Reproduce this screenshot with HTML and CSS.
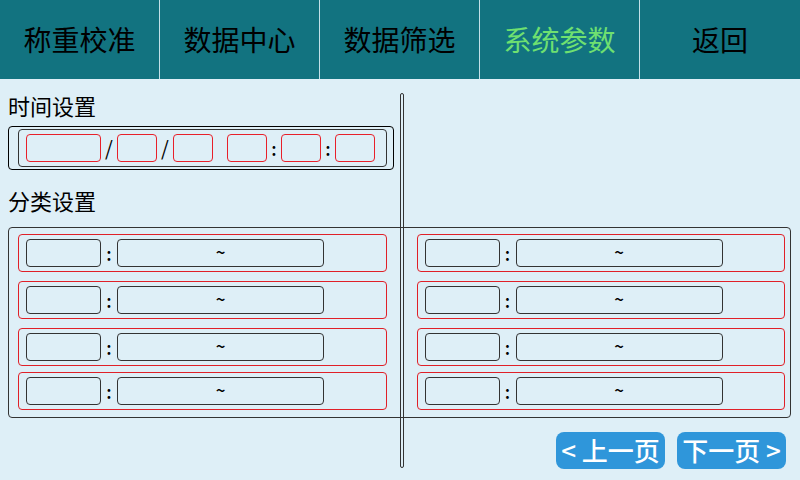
FILE: index.html
```html
<!DOCTYPE html>
<html lang="zh-CN">
<head>
  <meta charset="utf-8">
  <meta name="viewport" content="width=device-width, initial-scale=1">
  <title>系统参数</title>
  <link rel="stylesheet" href="styles.css">
</head>
<body>
  <nav class="tabs">
    <a class="tab" href="#calibration">称重校准</a>
    <a class="tab" href="#data">数据中心</a>
    <a class="tab" href="#filter">数据筛选</a>
    <a class="tab tab-active" href="#system" aria-current="page">系统参数</a>
    <a class="tab" href="#back">返回</a>
  </nav>

  <main class="content">
    <div class="divider"></div>

    <h2 class="heading">时间设置</h2>
    <section class="time-panel">
      <div class="time-fields">
        <input class="field field-long field-red" type="text" aria-label="年">
        <span class="slash">/</span>
        <input class="field field-short field-red" type="text" aria-label="月">
        <span class="slash">/</span>
        <input class="field field-short field-red" type="text" aria-label="日">
        <span class="colon"></span>
        <input class="field field-short field-red" type="text" aria-label="时">
        <span class="colon">:</span>
        <input class="field field-short field-red" type="text" aria-label="分">
        <span class="colon">:</span>
        <input class="field field-short field-red" type="text" aria-label="秒">
      </div>
    </section>

    <h2 class="heading">分类设置</h2>
    <section class="class-panel">
      <div class="class-row">
        <input class="field field-long" type="text" aria-label="分类1名称">
        <span class="colon colon-wide">:</span>
        <input class="field field-range" type="text" value="~" aria-label="分类1范围">
      </div>
      <div class="class-row">
        <input class="field field-long" type="text" aria-label="分类2名称">
        <span class="colon colon-wide">:</span>
        <input class="field field-range" type="text" value="~" aria-label="分类2范围">
      </div>
      <div class="class-row">
        <input class="field field-long" type="text" aria-label="分类3名称">
        <span class="colon colon-wide">:</span>
        <input class="field field-range" type="text" value="~" aria-label="分类3范围">
      </div>
      <div class="class-row">
        <input class="field field-long" type="text" aria-label="分类4名称">
        <span class="colon colon-wide">:</span>
        <input class="field field-range" type="text" value="~" aria-label="分类4范围">
      </div>
      <div class="class-row">
        <input class="field field-long" type="text" aria-label="分类5名称">
        <span class="colon colon-wide">:</span>
        <input class="field field-range" type="text" value="~" aria-label="分类5范围">
      </div>
      <div class="class-row">
        <input class="field field-long" type="text" aria-label="分类6名称">
        <span class="colon colon-wide">:</span>
        <input class="field field-range" type="text" value="~" aria-label="分类6范围">
      </div>
      <div class="class-row">
        <input class="field field-long" type="text" aria-label="分类7名称">
        <span class="colon colon-wide">:</span>
        <input class="field field-range" type="text" value="~" aria-label="分类7范围">
      </div>
      <div class="class-row">
        <input class="field field-long" type="text" aria-label="分类8名称">
        <span class="colon colon-wide">:</span>
        <input class="field field-range" type="text" value="~" aria-label="分类8范围">
      </div>
    </section>

    <div class="pager">
      <button class="page-button" type="button">&lt; 上一页</button>
      <button class="page-button" type="button">下一页 &gt;</button>
    </div>
  </main>
</body>
</html>
```

FILE: styles.css
```css
* {
  box-sizing: border-box;
}

body {
  margin: 0;
  min-height: 100vh;
  display: flex;
  flex-direction: column;
  background: #deeff7;
  color: #000;
  font-family: "Noto Sans CJK SC", sans-serif;
}

.tabs {
  display: grid;
  grid-template-columns: repeat(5, 1fr);
  background: #127380;
}

.tab {
  padding: 19px 0 20px;
  border-right: 1px solid #c4e0e8;
  color: #000;
  font-size: 28px;
  line-height: 40px;
  text-align: center;
  text-decoration: none;
}

.tab:last-child {
  border-right: 0;
}

.tab-active {
  color: #6fe070;
}

.content {
  position: relative;
  flex: 1;
  padding: 10px 9px 11px 8px;
}

/* Centre rule, drawn over the panels */
.divider {
  position: absolute;
  top: 14px;
  bottom: 12px;
  left: 50%;
  width: 4px;
  border: 1px solid #333;
  border-radius: 2px;
}

.heading {
  margin: 0;
  font-size: 22px;
  font-weight: 400;
  line-height: 32px;
}

.time-panel {
  width: 49.3%;
  margin: 5px 0 14px;
  padding: 2px 6px 2px 9px;
  border: 1px solid #000;
  border-radius: 4px;
}

.time-fields {
  display: flex;
  padding: 4px 7px;
  border: 1px solid #333;
  border-radius: 4px;
}

.class-panel {
  display: grid;
  grid-template-columns: 1fr 1fr;
  grid-template-rows: 47px 47px 44px 38px;
  grid-auto-flow: column;
  column-gap: 30px;
  align-items: start;
  margin-top: 11px;
  padding: 6px 5px 7px 9px;
  border: 1px solid #333;
  border-radius: 4px;
}

.class-row {
  display: flex;
  padding: 4px 7px;
  border: 1px solid #e02028;
  border-radius: 4px;
}

.field {
  min-width: 0;
  height: 28px;
  padding: 0 0 4px;
  border: 1px solid #333;
  border-radius: 4px;
  background: transparent;
  color: #000;
  font-family: inherit;
  font-size: 17px;
  font-weight: 500;
  text-align: center;
}

.field-red {
  border-color: #e8202a;
}

.field-long {
  flex: 0 1 75px;
}

.field-short {
  flex: 0 1 40px;
}

.field-range {
  flex: 0 1 207px;
}

.slash,
.colon {
  flex: none;
  line-height: 28px;
  text-align: center;
}

.slash {
  width: 16px;
  font-size: 20px;
}

.colon {
  width: 14px;
  font-size: 18px;
  font-weight: 500;
}

.colon-wide {
  width: 16px;
}

.pager {
  display: flex;
  justify-content: flex-end;
  gap: 12px;
  margin-top: 14px;
  padding-right: 5px;
}

.page-button {
  width: 109px;
  height: 37px;
  padding: 0 0 2px;
  border: 0;
  border-radius: 8px;
  background: #2f96da;
  color: #fff;
  font-family: inherit;
  font-size: 26px;
  font-weight: 500;
  line-height: 35px;
  white-space: nowrap;
}
```
